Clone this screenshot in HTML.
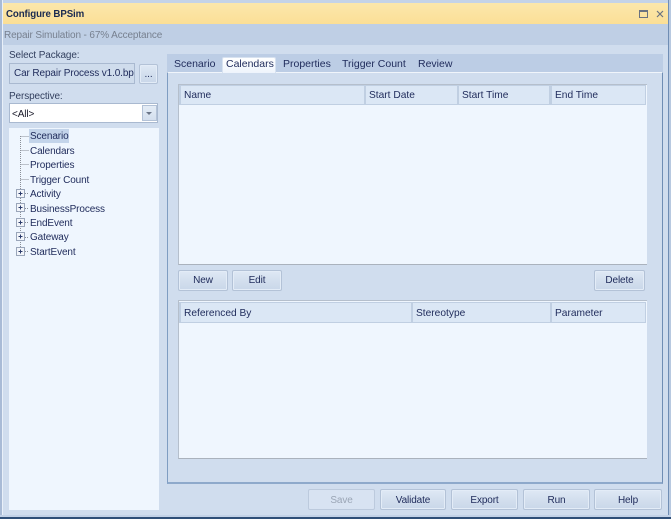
<!DOCTYPE html>
<html><head><meta charset="utf-8">
<style>
html,body{margin:0;padding:0;width:671px;height:519px;overflow:hidden;background:#d0ddee}
*{box-sizing:border-box}
body{font-family:"Liberation Sans",sans-serif;font-size:10px;letter-spacing:-.12px;color:#1e2a5a;position:relative}
.a{position:absolute}
.t{position:absolute;white-space:nowrap;line-height:13px}
.tab{font-size:10.5px;letter-spacing:0}
.btn{position:absolute;height:21px;border:1px solid #b3c2d7;border-radius:2px;background:linear-gradient(#dfe9f5,#d3dfee 50%,#c9d7e9);text-align:center;line-height:20px;color:#1e2a5a;box-shadow:inset 0 0 0 1px #e3ecf7}
.low{line-height:22px}
.th{position:absolute;background:#dbe7f5;border:1px solid #c0cfe2;border-left:2px solid #c0cfe2;line-height:20px;padding-left:3px;color:#1e2a5a;letter-spacing:0;font-size:10.2px}
</style></head><body>
<div class="a" style="left:0;top:0;width:671px;height:519px;background:#d0ddee"></div>
<div class="a" style="left:0;top:0;width:671px;height:3px;background:#c4d3e8"></div>
<div class="a" style="left:0;top:0;width:2px;height:519px;background:#a9bbd6"></div>
<div class="a" style="left:2px;top:0;width:1px;height:519px;background:#e9f0f9"></div>
<div class="a" style="left:668px;top:0;width:1px;height:519px;background:#6f8db4"></div>
<div class="a" style="left:669px;top:0;width:2px;height:519px;background:#b8c9e0"></div>
<div class="a" style="left:0;top:515px;width:671px;height:2px;background:#c3d2e7"></div>
<div class="a" style="left:0;top:517px;width:671px;height:2px;background:#2f4f78"></div>

<div class="a" style="left:3px;top:3px;width:665px;height:21px;background:linear-gradient(#fbe7ac,#fbdf96)"></div>
<div class="t" style="left:6px;top:8px;font-weight:bold;color:#1a2a50;font-size:9.7px;letter-spacing:-.1px">Configure BPSim</div>
<svg class="a" style="left:638px;top:9px" width="27" height="12"><rect x="1.500" y="1.500" width="8" height="7" fill="none" stroke="#6a7280"/><line x1="1" y1="2.500" x2="10" y2="2.500" stroke="#6a7280"/><path d="M19 2l6 6M25 2l-6 6" stroke="#6a7280" stroke-width="1.2" fill="none"/></svg>

<div class="a" style="left:3px;top:24px;width:665px;height:21px;background:#bfcfe5"></div>
<div class="t" style="left:4px;top:29px;color:#77808f">Repair Simulation - 67% Acceptance</div>

<div class="t" style="left:9px;top:49px;color:#33405f">Select Package:</div>
<div class="a" style="left:9px;top:63px;width:126px;height:21px;background:#cfdcec;border:1px solid #a9b9d0;overflow:hidden"><span class="t" style="left:4px;top:3px">Car Repair Process v1.0.bp</span></div>
<div class="btn" style="left:139px;top:64px;width:19px;height:20px;line-height:19px">...</div>
<div class="t" style="left:9px;top:90px;color:#33405f">Perspective:</div>
<div class="a" style="left:9px;top:103px;width:149px;height:20px;background:#fff;border:1px solid #a9b9d0"><span class="t" style="left:2px;top:4px;color:#1a1a2a">&lt;All&gt;</span>
<div class="a" style="left:132px;top:1px;width:15px;height:16px;background:linear-gradient(#e4ecf6,#d3dfee);border:1px solid #b3c2d7"><div class="a" style="left:3px;top:6px;width:0;height:0;border-left:3px solid transparent;border-right:3px solid transparent;border-top:3px solid #6a7588"></div></div></div>

<div class="a" style="left:9px;top:128px;width:150px;height:382px;background:#eff6fe"></div>
<div class="a" style="left:29px;top:129px;width:40px;height:14px;background:#c3d4ea"></div>
<svg class="a" style="left:9px;top:128px" width="22" height="135">
<path d="M11.5 8V123" stroke="#8a8f98" stroke-dasharray="1 1" fill="none"/>
<path d="M11.5 8.500H20M11.500 22.500H20M11.500 36.500H20M11.500 51.500H20M16 65.500H20M16 80.500H20M16 94.500H20M16 109.500H20M16 123.500H20" stroke="#8a8f98" stroke-dasharray="1 1" fill="none"/>
<g fill="#f2f5fa" stroke="#9aa6ba"><rect x="7.500" y="61.500" width="8" height="8"/><rect x="7.500" y="75.500" width="8" height="8"/><rect x="7.500" y="90.500" width="8" height="8"/><rect x="7.500" y="104.500" width="8" height="8"/><rect x="7.500" y="119.500" width="8" height="8"/></g>
<path d="M9.500 65.500h4M11.500 63.500v4M9.500 79.500h4M11.500 77.500v4M9.500 94.500h4M11.500 92.500v4M9.500 108.500h4M11.500 106.500v4M9.500 123.500h4M11.500 121.500v4" stroke="#2a3a6a" fill="none"/>
</svg>
<div class="t" style="left:30px;top:130px">Scenario</div>
<div class="t" style="left:30px;top:145px">Calendars</div>
<div class="t" style="left:30px;top:159px">Properties</div>
<div class="t" style="left:30px;top:174px">Trigger Count</div>
<div class="t" style="left:30px;top:188px">Activity</div>
<div class="t" style="left:30px;top:203px">BusinessProcess</div>
<div class="t" style="left:30px;top:217px">EndEvent</div>
<div class="t" style="left:30px;top:231px">Gateway</div>
<div class="t" style="left:30px;top:246px">StartEvent</div>

<div class="a" style="left:167px;top:54px;width:496px;height:18px;background:#bccde5"></div>
<div class="a" style="left:167px;top:72px;width:496px;height:412px;background:#d0ddee;border:1px solid #7f9dc2;border-top:1px solid #f0f5fb;border-bottom:2px solid #8ea9cb;border-right:1px solid #6f8db4"></div>
<div class="a" style="left:222px;top:57px;width:54px;height:16px;background:linear-gradient(#fff,#eef4fc);border:1px solid #d7e2f0;border-bottom:none;border-radius:2px 2px 0 0"></div>
<div class="t tab" style="left:174px;top:58px">Scenario</div>
<div class="t tab" style="left:226px;top:58px">Calendars</div>
<div class="t tab" style="left:283px;top:58px">Properties</div>
<div class="t tab" style="left:342px;top:58px">Trigger Count</div>
<div class="t tab" style="left:418px;top:58px">Review</div>

<div class="a" style="left:178px;top:84px;width:469px;height:181px;background:#eff6fe;border-top:1px solid #b5bfcc;border-left:1px solid #b5bfcc;border-bottom:1px solid #aab2bd"></div>
<div class="th" style="left:179px;top:85px;width:186px;height:20px">Name</div>
<div class="th" style="left:364px;top:85px;width:94px;height:20px">Start Date</div>
<div class="th" style="left:457px;top:85px;width:93px;height:20px">Start Time</div>
<div class="th" style="left:550px;top:85px;width:96px;height:20px">End Time</div>

<div class="btn" style="left:178px;top:270px;width:50px">New</div>
<div class="btn" style="left:232px;top:270px;width:50px">Edit</div>
<div class="btn" style="left:594px;top:270px;width:51px">Delete</div>

<div class="a" style="left:178px;top:300px;width:469px;height:159px;background:#eff6fe;border-top:1px solid #b5bfcc;border-left:1px solid #b5bfcc;border-bottom:1px solid #aab2bd"></div>
<div class="th" style="left:179px;top:302px;width:233px;height:21px;line-height:21px">Referenced By</div>
<div class="th" style="left:411px;top:302px;width:140px;height:21px;line-height:21px">Stereotype</div>
<div class="th" style="left:550px;top:302px;width:96px;height:21px;line-height:21px">Parameter</div>

<div class="btn low" style="left:308px;top:489px;width:67px;color:#9aa5b5;background:#d8e3f2;box-shadow:none;border-color:#bccadd">Save</div>
<div class="btn low" style="left:380px;top:489px;width:66px">Validate</div>
<div class="btn low" style="left:451px;top:489px;width:67px">Export</div>
<div class="btn low" style="left:523px;top:489px;width:67px">Run</div>
<div class="btn low" style="left:594px;top:489px;width:68px">Help</div>
</body></html>
